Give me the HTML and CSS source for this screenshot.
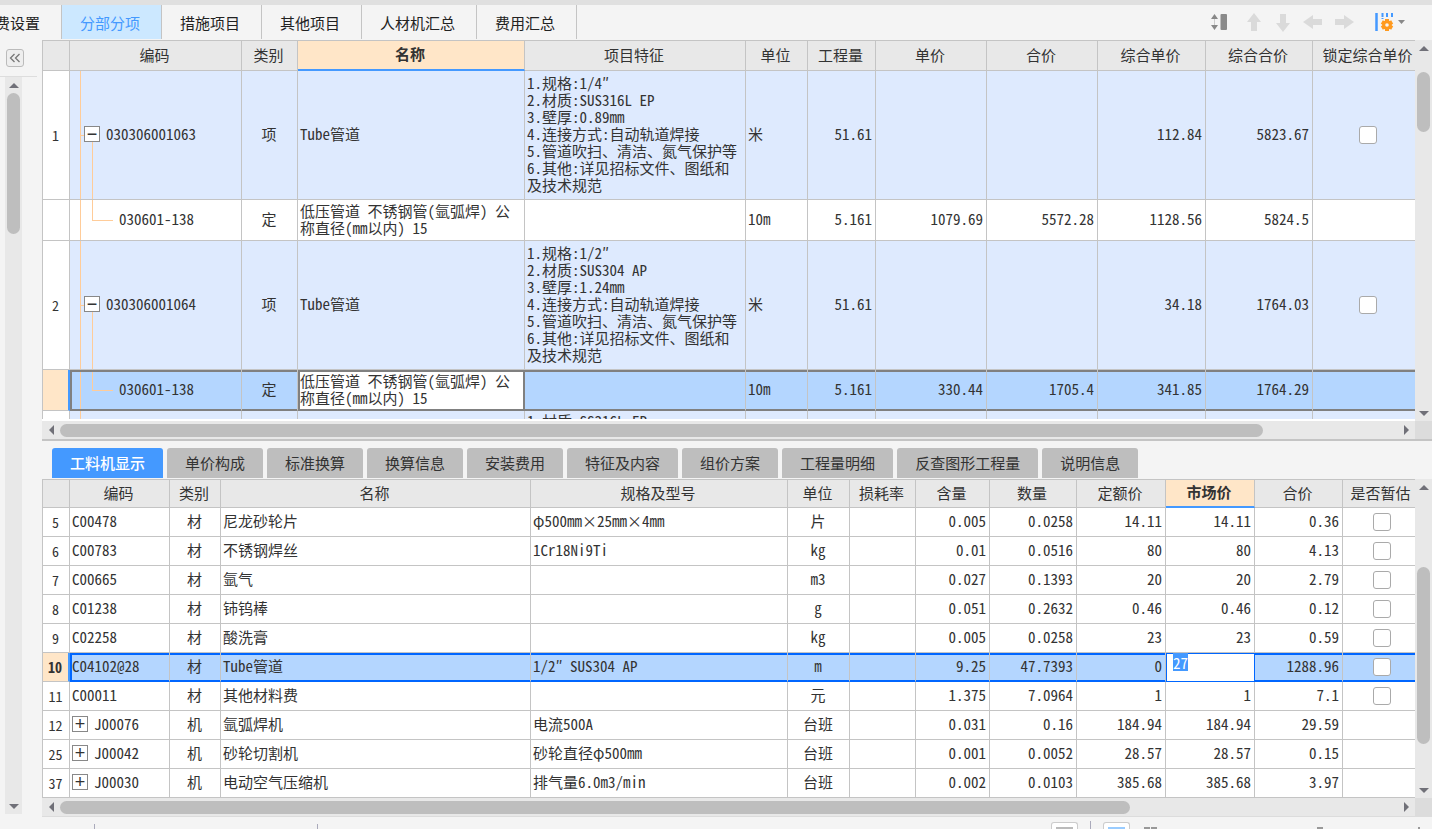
FILE: index.html
```html
<!DOCTYPE html>
<html lang="zh-CN">
<head>
<meta charset="utf-8">
<title>分部分项</title>
<link rel="stylesheet" href="styles.css">
</head>
<body>
<div class="strip"></div>
<header class="toolbar">
  <nav class="views">
    <button class="view view-cut">费设置</button>
    <button class="view view-on">分部分项</button>
    <button class="view">措施项目</button>
    <button class="view">其他项目</button>
    <button class="view">人材机汇总</button>
    <button class="view">费用汇总</button>
  </nav>
  <div class="tools">
    <button class="tool tool-height" aria-label="行高"><svg width="18" height="18" viewBox="0 0 18 18"><path d="M1 6 4.500 1 8 6zM1 12 4.500 17 8 12z" fill="#888"/><path d="M4.500 6v6" stroke="#ccc"/><rect x="10.500" y="1" width="6.500" height="16" rx="1" fill="#8a8a8a"/></svg></button>
    <button class="tool" aria-label="上移"><svg width="18" height="20" viewBox="0 0 18 20"><path d="M9 1 16 10H12V19H6V10H2z" fill="#dadada"/></svg></button>
    <button class="tool" aria-label="下移"><svg width="18" height="20" viewBox="0 0 18 20"><path d="M9 20 2 11H6V2H12V11H16z" fill="#dadada"/></svg></button>
    <button class="tool" aria-label="左移"><svg width="20" height="18" viewBox="0 0 20 18"><path d="M0 9 10 2V6H19V12H10V16z" fill="#dadada"/></svg></button>
    <button class="tool" aria-label="右移"><svg width="20" height="18" viewBox="0 0 20 18"><path d="M20 9 10 2V6H1V12H10V16z" fill="#dadada"/></svg></button>
    <button class="tool tool-set" aria-label="列设置"><svg width="32" height="20" viewBox="0 0 32 20"><path d="M1.500 1v18" stroke="#49f" stroke-width="2.500"/><path d="M7.500 1v6M12 1v4M17 1v5" stroke="#49f" stroke-width="2" stroke-dasharray="4 1"/><g fill="#ff9a1f"><circle cx="12" cy="13" r="4.800"/><path d="M10 7h4v12h-4z"/><path d="M10 7h4v12h-4z" transform="rotate(60 12 13)"/><path d="M10 7h4v12h-4z" transform="rotate(120 12 13)"/></g><circle cx="12" cy="13" r="1.800" fill="#f4f4f4"/><path d="M23 8h7l-3.500 4z" fill="#888"/></svg></button>
  </div>
</header>
<main class="main">
  <aside class="rail">
    <div class="rail-head"><button class="collapse" aria-label="收起"><svg width="12" height="10" viewBox="0 0 12 10"><path d="M5.500 1 1.500 5l4 4M10.500 1l-4 4 4 4" fill="none" stroke="#777" stroke-width="1.300"/></svg></button></div>
    <div class="vbar rail-bar"><i class="arrow up"></i><div class="track"><div class="thumb rail-thumb"></div></div><i class="arrow down"></i></div>
  </aside>
  <div class="content">
    <section class="upper">
      <div class="pane">
        <div class="clip">
          <table class="grid items">
            <colgroup><col class="w28"><col class="w172"><col class="w56"><col><col class="w221"><col class="w62"><col class="w68"><col class="w111"><col class="w111"><col class="w108"><col class="w107"><col class="w102"></colgroup>
            <thead><tr><th></th><th>编码</th><th>类别</th><th class="hot">名称</th><th>项目特征</th><th>单位</th><th>工程量</th><th>单价</th><th>合价</th><th>综合单价</th><th>综合合价</th><th class="lock">锁定综合单价</th></tr></thead>
            <tbody>
              <tr class="item"><td class="no">1</td><td class="tree parent"><div class="node"><button class="box" aria-label="折叠">−</button>030306001063</div></td><td class="c">项</td><td>Tube管道</td><td>1.规格:1/4″<br>2.材质:SUS316L EP<br>3.壁厚:0.89mm<br>4.连接方式:自动轨道焊接<br>5.管道吹扫、清洁、氮气保护等<br>6.其他:详见招标文件、图纸和<br>及技术规范</td><td>米</td><td class="r">51.61</td><td></td><td></td><td class="r">112.84</td><td class="r">5823.67</td><td class="lock"><input type="checkbox" aria-label="锁定综合单价"></td></tr>
              <tr class="sub"><td class="no"></td><td class="tree child">030601-138</td><td class="c">定</td><td>低压管道 不锈钢管(氩弧焊) 公<br>称直径(mm以内) 15</td><td></td><td>10m</td><td class="r">5.161</td><td class="r">1079.69</td><td class="r">5572.28</td><td class="r">1128.56</td><td class="r">5824.5</td><td></td></tr>
              <tr class="item"><td class="no">2</td><td class="tree parent"><div class="node"><button class="box" aria-label="折叠">−</button>030306001064</div></td><td class="c">项</td><td>Tube管道</td><td>1.规格:1/2″<br>2.材质:SUS304 AP<br>3.壁厚:1.24mm<br>4.连接方式:自动轨道焊接<br>5.管道吹扫、清洁、氮气保护等<br>6.其他:详见招标文件、图纸和<br>及技术规范</td><td>米</td><td class="r">51.61</td><td></td><td></td><td class="r">34.18</td><td class="r">1764.03</td><td class="lock"><input type="checkbox" aria-label="锁定综合单价"></td></tr>
              <tr class="sub picked"><td class="no"></td><td class="tree child">030601-138</td><td class="c">定</td><td class="current">低压管道 不锈钢管(氩弧焊) 公<br>称直径(mm以内) 15</td><td></td><td>10m</td><td class="r">5.161</td><td class="r">330.44</td><td class="r">1705.4</td><td class="r">341.85</td><td class="r">1764.29</td><td></td></tr>
              <tr class="item next"><td class="no"></td><td class="tree"></td><td></td><td></td><td>1.材质:SS316L EP</td><td></td><td></td><td></td><td></td><td></td><td></td><td></td></tr>
            </tbody>
          </table>
        </div>
        <div class="vbar"><i class="arrow up tall"></i><div class="track"><div class="thumb items-v"></div></div><i class="arrow down"></i></div>
      </div>
      <div class="hbar"><i class="arrow left"></i><div class="track"><div class="thumb items-h"></div></div><i class="arrow right"></i><i class="corner"></i></div>
    </section>
    <section class="lower">
      <nav class="tabs">
        <button class="tab tab-on">工料机显示</button><button class="tab">单价构成</button><button class="tab">标准换算</button><button class="tab">换算信息</button><button class="tab">安装费用</button><button class="tab">特征及内容</button><button class="tab">组价方案</button><button class="tab">工程量明细</button><button class="tab">反查图形工程量</button><button class="tab">说明信息</button>
      </nav>
      <div class="pane">
        <div class="clip">
          <table class="grid parts">
            <colgroup><col class="w28"><col class="w100"><col class="w51"><col><col class="w257"><col class="w62"><col class="w66"><col class="w74"><col class="w87"><col class="w89"><col class="w89"><col class="w88"><col class="w72"></colgroup>
            <thead><tr><th></th><th>编码</th><th>类别</th><th>名称</th><th>规格及型号</th><th>单位</th><th>损耗率</th><th>含量</th><th>数量</th><th>定额价</th><th class="hot">市场价</th><th>合价</th><th class="est">是否暂估</th></tr></thead>
            <tbody>
              <tr><td class="no">5</td><td>C00478</td><td class="c">材</td><td>尼龙砂轮片</td><td>φ500mm×25mm×4mm</td><td class="c">片</td><td></td><td class="r">0.005</td><td class="r">0.0258</td><td class="r">14.11</td><td class="r">14.11</td><td class="r">0.36</td><td class="est"><input type="checkbox" aria-label="是否暂估"></td></tr>
              <tr><td class="no">6</td><td>C00783</td><td class="c">材</td><td>不锈钢焊丝</td><td>1Cr18Ni9Ti</td><td class="c">kg</td><td></td><td class="r">0.01</td><td class="r">0.0516</td><td class="r">80</td><td class="r">80</td><td class="r">4.13</td><td class="est"><input type="checkbox" aria-label="是否暂估"></td></tr>
              <tr><td class="no">7</td><td>C00665</td><td class="c">材</td><td>氩气</td><td></td><td class="c">m3</td><td></td><td class="r">0.027</td><td class="r">0.1393</td><td class="r">20</td><td class="r">20</td><td class="r">2.79</td><td class="est"><input type="checkbox" aria-label="是否暂估"></td></tr>
              <tr><td class="no">8</td><td>C01238</td><td class="c">材</td><td>铈钨棒</td><td></td><td class="c">g</td><td></td><td class="r">0.051</td><td class="r">0.2632</td><td class="r">0.46</td><td class="r">0.46</td><td class="r">0.12</td><td class="est"><input type="checkbox" aria-label="是否暂估"></td></tr>
              <tr><td class="no">9</td><td>C02258</td><td class="c">材</td><td>酸洗膏</td><td></td><td class="c">kg</td><td></td><td class="r">0.005</td><td class="r">0.0258</td><td class="r">23</td><td class="r">23</td><td class="r">0.59</td><td class="est"><input type="checkbox" aria-label="是否暂估"></td></tr>
              <tr class="picked"><td class="no">10</td><td>C04102@28</td><td class="c">材</td><td>Tube管道</td><td>1/2″ SUS304 AP</td><td class="c">m</td><td></td><td class="r">9.25</td><td class="r">47.7393</td><td class="r">0</td><td class="editing"><input type="text" class="edit" id="price" aria-label="市场价" value="27"></td><td class="r">1288.96</td><td class="est"><input type="checkbox" aria-label="是否暂估"></td></tr>
              <tr><td class="no">11</td><td>C00011</td><td class="c">材</td><td>其他材料费</td><td></td><td class="c">元</td><td></td><td class="r">1.375</td><td class="r">7.0964</td><td class="r">1</td><td class="r">1</td><td class="r">7.1</td><td class="est"><input type="checkbox" aria-label="是否暂估"></td></tr>
              <tr><td class="no">12</td><td><div class="node"><button class="box" aria-label="展开">+</button>J00076</div></td><td class="c">机</td><td>氩弧焊机</td><td>电流500A</td><td class="c">台班</td><td></td><td class="r">0.031</td><td class="r">0.16</td><td class="r">184.94</td><td class="r">184.94</td><td class="r">29.59</td><td></td></tr>
              <tr><td class="no">25</td><td><div class="node"><button class="box" aria-label="展开">+</button>J00042</div></td><td class="c">机</td><td>砂轮切割机</td><td>砂轮直径φ500mm</td><td class="c">台班</td><td></td><td class="r">0.001</td><td class="r">0.0052</td><td class="r">28.57</td><td class="r">28.57</td><td class="r">0.15</td><td></td></tr>
              <tr><td class="no">37</td><td><div class="node"><button class="box" aria-label="展开">+</button>J00030</div></td><td class="c">机</td><td>电动空气压缩机</td><td>排气量6.0m3/min</td><td class="c">台班</td><td></td><td class="r">0.002</td><td class="r">0.0103</td><td class="r">385.68</td><td class="r">385.68</td><td class="r">3.97</td><td></td></tr>
            </tbody>
          </table>
        </div>
        <div class="vbar"><i class="arrow up"></i><div class="track"><div class="thumb parts-v"></div></div><i class="arrow down"></i></div>
      </div>
      <div class="hbar"><i class="arrow left"></i><div class="track"><div class="thumb parts-h"></div></div><i class="arrow right"></i><i class="corner"></i></div>
    </section>
  </div>
</main>
<footer class="status">
  <div class="marks"><i class="tick"></i><i class="tick"></i></div>
  <div class="modes"><button class="mode" aria-label="布局"></button><i class="tick tick-long"></i><button class="mode mode-on" aria-label="表格"></button><svg width="290" height="4" viewBox="0 0 290 4"><path d="M2 3h6M9 3h6M175 3h6M276 3h2" stroke="#999" stroke-width="2"/></svg></div>
</footer>
<script src="app.js"></script>
</body>
</html>
```
FILE: styles.css
```css
* { box-sizing: border-box; }

body {
  margin: 0;
  height: 100vh;
  display: flex;
  flex-direction: column;
  overflow: hidden;
  background: #f4f4f4;
  color: #333;
  font: 15px/17px "Noto Sans CJK SC", sans-serif;
}

button { font: inherit; color: inherit; border: 0; padding: 0; background: none; }

.strip { height: 5px; flex: none; background: #e0e0e0; }

.toolbar { height: 35px; flex: none; display: flex; justify-content: space-between; }
.views { display: flex; height: 34px; }
.view { padding: 1px 21px 0 18px; border-right: 1px solid #c4c4c4; white-space: nowrap; color: #222; }
.view-cut { width: 62px; display: flex; justify-content: flex-end; align-items: center; overflow: hidden; }
.view-on { background: #cce8ff; color: #49f; }

.tools { display: flex; align-items: center; gap: 11px; padding: 0 25px 2px 0; }
.tool { display: flex; }
.tool-height { margin-right: 6px; }
.tool-set { margin-left: 10px; }

.main { flex: 1; min-height: 0; display: flex; }

.rail { width: 42px; flex: none; display: flex; flex-direction: column; padding-bottom: 3px; }
.rail-head { height: 37px; margin-right: 5px; padding: 9px 0 0 6px; border-bottom: 1px solid #ddd; }
.collapse {
  width: 18px; height: 18px;
  display: flex; align-items: center; justify-content: center;
  border: 1px solid #bbb; border-radius: 3px; background: #eee;
}
.rail-bar { flex: 1; margin-left: 5px; }

.content { flex: 1; min-width: 0; display: flex; flex-direction: column; }
.upper { flex: 1; min-height: 0; display: flex; flex-direction: column; border-bottom: 2px solid #c4c4c4; }
.upper .pane { flex: 1; min-height: 0; }
.upper .clip { margin-bottom: 2px; }
.lower { flex: none; border-bottom: 1px solid #dcdcdc; }

.pane { display: flex; background: #fff; }
.clip { flex: 1; min-width: 0; overflow: hidden; }

/* scroll bars */
.vbar { width: 17px; display: flex; flex-direction: column; background: #e8e8e8; }
.hbar { height: 18px; flex: none; display: flex; background: #e8e8e8; }
.track { flex: 1; min-width: 0; min-height: 0; }
.thumb { border-radius: 7px; background: #bebebe; }
.vbar .thumb { width: 13px; margin-left: 2px; }
.hbar .thumb { height: 13px; margin-top: 3px; }
.rail-thumb { height: 20%; }
.items-v { height: 18%; }
.items-h { width: 90%; }
.lower .vbar .track { display: flex; align-items: flex-end; padding-bottom: 38px; }
.parts-v { height: 71%; }
.parts-h { width: 80%; }
.corner { width: 17px; background: #dcdcdc; }
.arrow { display: flex; align-items: center; justify-content: center; width: 18px; height: 18px; flex: none; }
.vbar .arrow { width: 17px; height: 16px; }
.vbar .tall { height: 32px; align-items: flex-start; padding-top: 6px; }
.arrow::before { content: ""; border: 5px solid transparent; }
.up::before { border-top: 0; border-bottom-color: #707078; }
.down::before { border-bottom: 0; border-top-color: #707078; }
.left::before { border-left: 0; border-right-color: #707078; }
.right::before { border-right: 0; border-left-color: #707078; }

/* tables */
.grid {
  width: 100%;
  table-layout: fixed;
  border-collapse: separate;
  border-spacing: 0;
  font-family: "Noto Sans Mono CJK SC", "Noto Sans CJK SC", monospace;
}
.grid th, .grid td { border: solid #c4c4c4; border-width: 0 1px 1px 0; padding: 0 3px 3px 2px; text-align: left; font-weight: 400; }
.grid th { border-top-width: 1px; background: #e8e8e8; text-align: center; white-space: nowrap; padding: 0 2px 3px 0; }
.grid th:first-child, .grid .no { border-left-width: 1px; }
.grid th:last-child, .grid td:last-child { border-right-width: 0; }
.grid .hot { background: #ffe6c8; font-weight: 700; border-bottom: 2px solid #49f; }
.grid .no { padding: 0 1px 0 0; background: #fff; text-align: center; font-size: 14px; }
.grid .c, .grid .est, .grid .lock { text-align: center; }
.grid .r { text-align: right; }
.grid td.lock { padding: 0 0 0 8px; }
.grid td.est { padding: 0 0 0 6px; }
.grid th.lock { padding: 0 0 3px 7px; }
.grid th.est { padding: 0 0 3px 3px; }
.items th { height: 31px; }
.items .item { height: 129px; background: #deeafe; }
.items .sub { height: 41px; }
.items .next td { vertical-align: top; padding-top: 1px; }
.parts th { height: 29px; }
.parts tbody tr { height: 29px; }

.w28 { width: 28px; } .w51 { width: 51px; } .w56 { width: 56px; } .w62 { width: 62px; }
.w66 { width: 66px; } .w68 { width: 68px; } .w72 { width: 72px; } .w74 { width: 74px; }
.w87 { width: 87px; } .w88 { width: 88px; } .w89 { width: 89px; } .w100 { width: 100px; }
.w102 { width: 102px; } .w107 { width: 107px; } .w108 { width: 108px; } .w111 { width: 111px; }
.w172 { width: 172px; } .w221 { width: 221px; } .w257 { width: 257px; }

/* outline branches */
.tree {
  --line: linear-gradient(#fc9, #fc9);
  background: var(--line) 10px 0 / 1px 100% no-repeat;
}
.grid .parent {
  padding-left: 14px;
  background: var(--line) 10px 0 / 1px 100% no-repeat, var(--line) 10px 50% / 6px 1px no-repeat, var(--line) 22px 100% / 1px 50% no-repeat;
}
.grid .child {
  padding-left: 49px;
  background: var(--line) 10px 0 / 1px 100% no-repeat, var(--line) 22px 0 / 1px 50% no-repeat, var(--line) 22px 50% / 21px 1px no-repeat;
}
.node { display: flex; align-items: center; gap: 6px; }
.box {
  width: 16px; height: 16px; flex: none;
  border: 1px solid #888; background: #fff;
  font: 18px/12px "Liberation Sans", sans-serif;
}

/* selected rows */
.picked { background: #b4d6ff; }
.items .picked td { box-shadow: inset 0 2px #808080, inset 0 -1px #808080; border-bottom-color: #808080; }
.items .picked .child { box-shadow: inset 2px 2px #808080, inset 0 -1px #808080; }
.items .picked .current { background: #fff; border-right-color: #808080; box-shadow: inset 2px 2px #808080, inset -1px -1px #808080; }
.parts .picked td { box-shadow: inset 0 2px #06f, inset 0 -1px #06f; border-bottom-color: #06f; }
.parts .picked td:nth-child(2) { box-shadow: inset 2px 2px #06f, inset 0 -1px #06f; }
.grid .picked .no { background: #ffe6c8; border-bottom-color: #c4c4c4; border-right: 2px solid #49f; box-shadow: none; font-weight: 700; }
.grid .picked .editing { padding: 0; border-color: #06f; background: #fff; box-shadow: inset 1px 1px #06f; vertical-align: top; }
.edit { display: block; width: 100%; height: 18px; border: 0; outline: 0; padding: 0 7px; background: transparent; font: inherit; color: inherit; }
.edit::selection { background: #49f; color: #fff; }

input[type="checkbox"] {
  appearance: none;
  display: block;
  width: 18px; height: 18px;
  margin: 0 auto;
  border: 1px solid #aaa; border-radius: 3px; background: #fff;
}

/* detail tabs */
.tabs { display: flex; gap: 4px; height: 38px; padding: 7px 0 1px 10px; }
.tab { padding: 0 18px 1px; border-radius: 3px 3px 0 0; background: #bebebe; white-space: nowrap; }
.tab-on { background: #49f; color: #fff; font-weight: 500; }

/* status bar */
.status { height: 12px; flex: none; display: flex; justify-content: space-between; align-items: flex-end; overflow: hidden; }
.marks { display: flex; gap: 222px; padding-left: 94px; }
.tick { width: 1px; height: 5px; background: #aab; }
.tick-long { height: 8px; }
.modes { display: flex; align-items: flex-end; gap: 12px; }
.mode { width: 27px; height: 7px; padding: 4px 4px 0; border: 1px solid #ccc; border-bottom: 0; border-radius: 3px 3px 0 0; background: linear-gradient(#bbb, #bbb) content-box, #fff; }
.mode-on { background: linear-gradient(#9cf, #9cf) content-box, #fff; }
```
FILE: app.js
```js
const price = document.getElementById("price");
price.focus();
price.select();
```
